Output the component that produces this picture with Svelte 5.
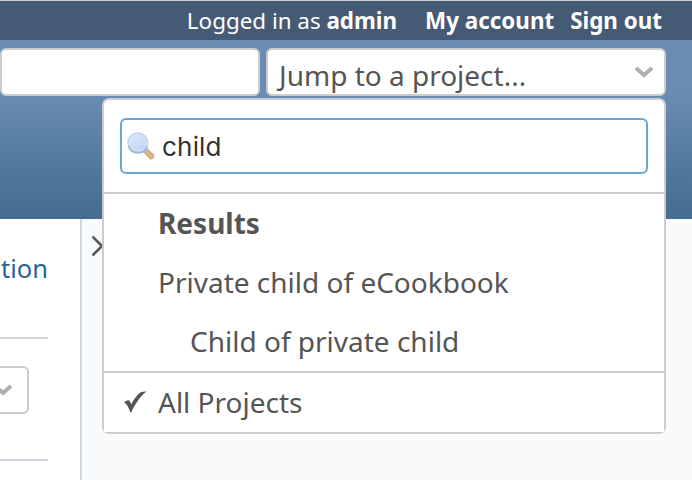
<script>
  const results = [
    { name: 'Private child of eCookbook', child: false },
    { name: 'Child of private child', child: true }
  ];
</script>

<div class="page">
  <nav class="top">
    <span class="logged">Logged in as <b>admin</b></span>
    <b class="account">My account</b>
    <b class="signout">Sign out</b>
  </nav>
  <header>
    <div class="search"></div>
    <div class="jump">
      <span>Jump to a project...</span>
      <svg width="20" height="14" viewBox="0 0 20 14"><path d="M2 3L10 10L18 3" fill="none" stroke="#b0b0b0" stroke-width="4" /></svg>
    </div>
  </header>
  <main>
    <section class="content">
      <div class="links"><span>tion</span></div>
      <div class="filter">
        <div class="select">
          <svg width="20" height="14" viewBox="0 0 20 14"><path d="M2 3L10 10L18 3" fill="none" stroke="#b0b0b0" stroke-width="4" /></svg>
        </div>
      </div>
    </section>
    <aside>
      <svg width="12" height="20" viewBox="0 0 12 20"><path d="M1.3 1.3L10 10L1.3 18.7" fill="none" stroke="#555" stroke-width="2.6" stroke-linecap="round" /></svg>
    </aside>
  </main>

  <div class="dropdown">
    <div class="query">
      <div class="field">
        <svg width="28" height="28" viewBox="0 0 28 28">
          <defs>
            <linearGradient id="glass" x1="0" y1="0" x2="1" y2="1">
              <stop offset="0" stop-color="#dce9fa" />
              <stop offset="1" stop-color="#bad2f2" />
            </linearGradient>
            <linearGradient id="handle" x1="0" y1="1" x2="1" y2="0">
              <stop offset="0" stop-color="#a77b43" />
              <stop offset=".5" stop-color="#dfbd8c" />
              <stop offset="1" stop-color="#aa8150" />
            </linearGradient>
          </defs>
          <path d="M15.5 19.5L19.5 15.5L27 22.5Q28.3 27.8 23 27.5Z" fill="url(#handle)" />
          <path d="M15.5 19.5L19.5 15.5L21.7 17.5L17.5 21.5Z" fill="#c8b69d" />
          <circle cx="10.8" cy="10.8" r="9.8" fill="#d8e4f6" stroke="#c3d5f0" stroke-width="1.5" />
          <path d="M1.5 14A9.8 9.8 0 0 0 20.1 14" fill="none" stroke="#9fb9e1" stroke-width="2" />
          <circle cx="10.8" cy="10.8" r="7.8" fill="url(#glass)" />
        </svg>
        <span>child</span>
      </div>
    </div>
    <div class="results">
      <div class="item"><strong>Results</strong></div>
      {#each results as r}
        <div class="item" class:nested={r.child}><span>{r.name}</span></div>
      {/each}
    </div>
    <div class="all">
      <svg width="24" height="24" viewBox="0 0 24 24"><path d="M0 12.5Q3.5 9.5 5.2 10.5Q6.2 11.5 7.3 14.2C10.5 8 14.5 3 17.5 2Q19.5 1.4 22.3 1.6C16 7 11.5 13.5 7.2 22.4H6.4C4.7 18 3.2 14 0 12.5Z" fill="#555" /></svg>
      <span>All Projects</span>
    </div>
  </div>
</div>

<style>
  :global(body) { margin: 0; }
  .page { position: relative; width: 692px; height: 480px; overflow: hidden; display: flex; flex-direction: column; box-sizing: border-box; font: 28px/38px "Noto Sans", sans-serif; color: #555; background: #fff; white-space: nowrap; }
  .page * { box-sizing: border-box; }
  svg { display: block; flex: none; }
  .top { height: 40px; flex: none; border-top: 1px solid #c9cdc9; background: #455a74; color: #fff; display: flex; justify-content: flex-end; padding-right: 30px; font-size: 22.4px; line-height: 39px; }
  .account { margin: 0 16px 0 28px; }
  header { height: 179px; flex: none; display: flex; align-items: flex-start; gap: 6px; padding-top: 8px; background: linear-gradient(#698cb4 0, #698cb4 52px, #446b91 179px); }
  .search, .jump { height: 48px; border: 2px solid #ccc; border-radius: 6px; background: #fff; }
  .search { width: 260px; }
  .jump { width: 400px; display: flex; justify-content: space-between; padding: 6px 10px 0 11px; }
  .jump svg { margin-top: 9px; }
  main { display: flex; flex: 1; }
  .content { width: 82px; border-right: 2px solid #d0d7de; }
  .links { width: 48px; height: 120px; padding: 30px 0 0 1px; border-bottom: 2px solid #d0d7de; color: #2a6496; font-size: 25.5px; }
  .filter { width: 48px; height: 122px; padding-top: 27px; border-bottom: 2px solid #d0d7de; }
  .select { width: 29px; height: 48px; border: 2px solid #ccc; border-left: 0; border-radius: 0 6px 6px 0; display: flex; justify-content: flex-end; align-items: center; padding-right: 14px; }
  aside { flex: 1; background: #f8fafc; padding: 17px 10px; }
  .dropdown { position: absolute; left: 102px; top: 98px; width: 564px; height: 336px; border: 2px solid #ccc; border-radius: 7px; background: #fff; }
  .query { height: 94px; padding: 18px 16px 0; border-bottom: 2px solid #ccc; }
  .field { height: 56px; border: 2px solid #68a7d7; border-radius: 6px; display: flex; align-items: center; padding-left: 5px; font: 26px/34px Inter, sans-serif; color: #333; }
  .field span { margin: 2px 0 0 7px; letter-spacing: 0.2px; }
  .results { height: 179px; border-bottom: 2px solid #ccc; }
  .item { height: 59px; padding: 10px 0 0 54px; }
  .nested { padding-left: 86px; }
  .all { display: flex; height: 59px; padding: 10px 0 0 20px; background: #fff; }
  .all svg { margin-top: 7px; }
  .all span { margin-left: 10px; }
</style>
